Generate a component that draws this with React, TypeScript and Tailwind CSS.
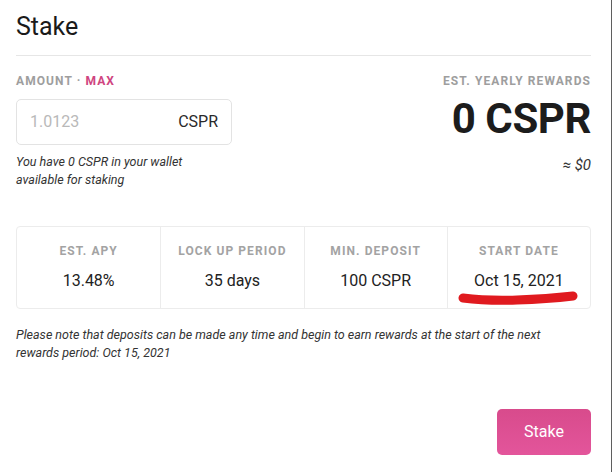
const stats = [
  { label: "EST. APY", value: "13.48%" },
  { label: "LOCK UP PERIOD", value: "35 days" },
  { label: "MIN. DEPOSIT", value: "100 CSPR" },
  { label: "START DATE", value: "Oct 15, 2021" },
];

export default function App() {
  return (
    <div className="w-[612px] h-[472px] bg-white flex font-['Roboto',sans-serif] text-[#222]">
      <div className="flex-1 flex flex-col pl-4 pr-[20px] border-r border-[#5f5f5f]">
        {/* Header */}
        <div className="pt-[13px] pb-[14px] border-b border-[#e6e6e6]">
          <h1 className="text-[25px] leading-[28px] text-[#1a1a1a]">Stake</h1>
        </div>

        {/* Amount + rewards */}
        <div className="flex justify-between mt-[18px]">
          <div className="flex flex-col">
            <div className="text-[12px] leading-[14px] font-bold tracking-[0.09em] text-[#9e9e9e]">
              AMOUNT · <span className="text-[#cf4580]">MAX</span>
            </div>
            <div className="mt-[11px] w-[216px] h-[46px] border border-[#e3e3e3] rounded-[5px] flex items-center justify-between pl-[13px] pr-[13px]">
              <span className="text-[16px] text-[#b9b9b9]">1.0123</span>
              <span className="text-[16px] text-[#2a2a2a]">CSPR</span>
            </div>
            <p className="mt-[8px] text-[12.5px] leading-[18px] italic text-[#333]">
              You have 0 CSPR in your wallet
              <br />
              available for staking
            </p>
          </div>
          <div className="flex flex-col items-end">
            <div className="text-[12px] leading-[14px] font-bold tracking-[0.09em] text-[#9e9e9e]">
              EST. YEARLY REWARDS
            </div>
            <div className="mt-[10px] text-[42px] leading-[42px] font-bold text-[#1c1c1c] tracking-[-0.01em]">
              0 CSPR
            </div>
            <div className="mt-[16px] text-[15px] leading-[18px] italic text-[#333]">≈ $0</div>
          </div>
        </div>

        {/* Stats */}
        <div className="mt-[37px] grid grid-cols-4 border border-[#ececec] rounded-[4px]">
          {stats.map((s, i) => (
            <div
              key={s.label}
              className={`relative flex flex-col items-center pt-[17px] pb-[17px] ${i > 0 ? "border-l border-[#ececec]" : ""}`}
            >
              <div className="text-[12px] leading-[14px] font-bold tracking-[0.09em] text-[#a3a3a3]">
                {s.label}
              </div>
              <div className="mt-[13px] text-[16px] leading-[20px] text-[#222]">{s.value}</div>
              {i === 3 && (
                <svg
                  className="absolute left-[9px] top-[62px]"
                  width="122"
                  height="16"
                  viewBox="0 0 122 16"
                >
                  <path
                    d="M6 9 Q30 12 60 11 Q90 10 116 7"
                    stroke="#e01a1f"
                    strokeWidth="9"
                    strokeLinecap="round"
                    fill="none"
                  />
                </svg>
              )}
            </div>
          ))}
        </div>

        <p className="mt-[17px] text-[12.5px] leading-[18px] italic text-[#333]">
          Please note that deposits can be made any time and begin to earn rewards at the start of the next
          <br />
          rewards period: Oct 15, 2021
        </p>

        <div className="mt-auto mb-[17px] flex justify-end">
          <button className="w-[94px] h-[46px] rounded-[5px] bg-gradient-to-b from-[#d84b8c] to-[#e3559b] text-white text-[16px]">
            Stake
          </button>
        </div>
      </div>
    </div>
  );
}
